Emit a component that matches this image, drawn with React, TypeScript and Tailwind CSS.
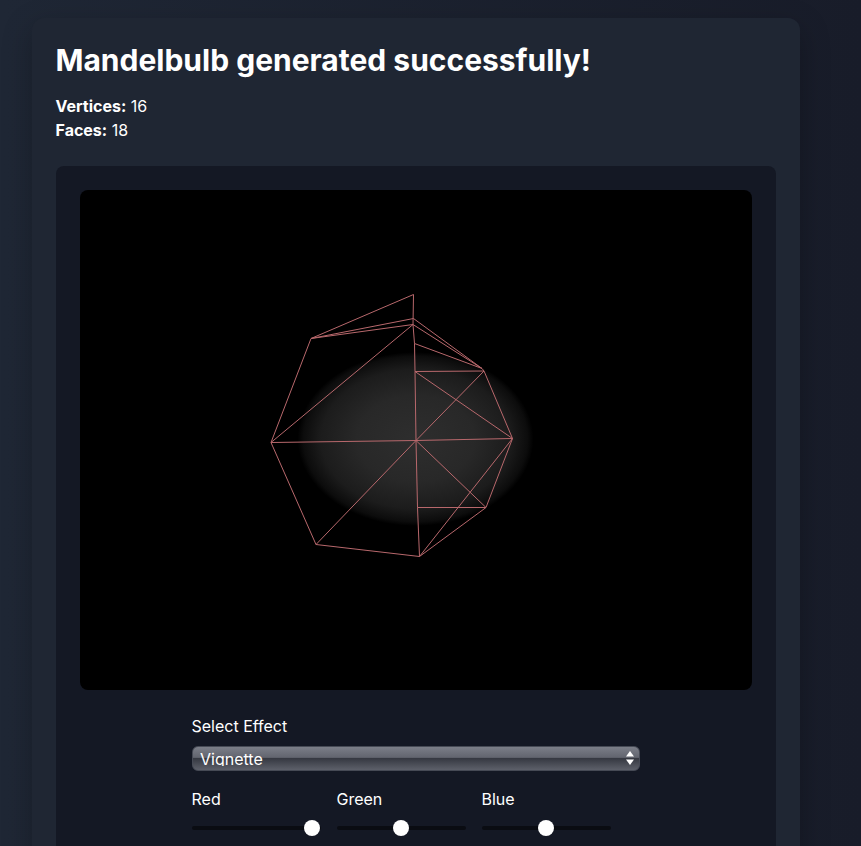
const points: Record<string, [number, number]> = {
  a: [413.5, 294.5],
  b: [413.5, 318.5],
  c: [413, 324.5],
  d: [311, 338.5],
  e: [414.5, 343.5],
  f: [482, 368.5],
  g: [484, 371],
  h: [415, 371.5],
  o: [416, 440.5],
  i: [512.5, 438.5],
  j: [271, 442.5],
  k: [486, 507.5],
  l: [417.5, 507.5],
  m: [419.5, 556.5],
  n: [316, 544.5],
};

const edges = [
  "a-d", "a-c", "c-e", "e-h", "h-o", "o-l", "l-m", "d-b", "d-c", "d-j", "j-c", "j-o", "j-n",
  "n-o", "n-m", "m-k", "m-i", "o-i", "o-k", "k-i", "k-l", "i-g", "g-o", "g-h", "h-i", "b-f",
  "c-f", "e-f", "f-g",
];

const Wireframe = () => (
  <svg viewBox="80 190 672 500" className="w-full h-full block">
    <defs>
      <radialGradient id="vignette">
        <stop offset="0" stopColor="#2e2e2e" />
        <stop offset="0.5" stopColor="#282828" />
        <stop offset="0.8" stopColor="#1c1c1c" />
        <stop offset="0.95" stopColor="#0c0c0c" />
        <stop offset="1" stopColor="#000000" />
      </radialGradient>
    </defs>
    <ellipse cx="415.5" cy="439" rx="118" ry="87" fill="url(#vignette)" />
    {edges.map((edge) => {
      const [from, to] = edge.split("-");
      return (
        <line
          key={edge}
          x1={points[from][0]}
          y1={points[from][1]}
          x2={points[to][0]}
          y2={points[to][1]}
          stroke="#b8686c"
          strokeWidth={1}
        />
      );
    })}
  </svg>
);

const Slider = ({ label, value }: { label: string; value: number }) => (
  <label className="block w-[129px]">
    <span className="block">{label}</span>
    <input
      type="range"
      min={0}
      max={255}
      defaultValue={value}
      className="block w-full h-1 mt-[15px] appearance-none rounded bg-[#0a0c12] outline-none [&::-webkit-slider-thumb]:appearance-none [&::-webkit-slider-thumb]:w-4 [&::-webkit-slider-thumb]:h-4 [&::-webkit-slider-thumb]:rounded-full [&::-webkit-slider-thumb]:bg-white"
    />
  </label>
);

export default function App() {
  return (
    <div className="h-screen overflow-hidden bg-gradient-to-r from-[#1f2735] to-[#181c29] font-['Inter',sans-serif] text-white">
      <div className="w-[768px] ml-[31.5px] mt-[18px] p-6 rounded-xl bg-[#1f2633] shadow-[0_10px_30px_rgba(0,0,0,0.25)]">
        <h1 className="text-3xl font-bold mb-4">Mandelbulb generated successfully!</h1>
        <p><strong>Vertices:</strong> 16</p>
        <p><strong>Faces:</strong> 18</p>
        <div className="mt-6 p-6 rounded-lg bg-[#141824]">
          <div className="h-[500px] rounded-lg bg-black overflow-hidden">
            <Wireframe />
          </div>
          <div className="w-[448px] mx-auto mt-6">
            <label className="block mb-2">Select Effect</label>
            <div className="relative">
              <select className="block w-full h-[25px] pl-[7.5px] pb-[4px] appearance-none rounded-md border border-[#464a55] bg-[linear-gradient(#7b7e88_0%,#62656f_45%,#363942_50%,#5d606a_100%)] text-white outline-none">
                <option>Vignette</option>
              </select>
              <svg viewBox="0 0 8 14" className="absolute right-[6px] top-[5px] w-2 h-[14px] fill-white">
                <path d="M4 0 L8 5.5 L0 5.5 Z" />
                <path d="M4 14 L8 8.5 L0 8.5 Z" />
              </svg>
            </div>
            <div className="flex gap-4 mt-4 pb-6">
              <Slider label="Red" value={253} />
              <Slider label="Green" value={128} />
              <Slider label="Blue" value={128} />
            </div>
          </div>
        </div>
      </div>
    </div>
  );
}
